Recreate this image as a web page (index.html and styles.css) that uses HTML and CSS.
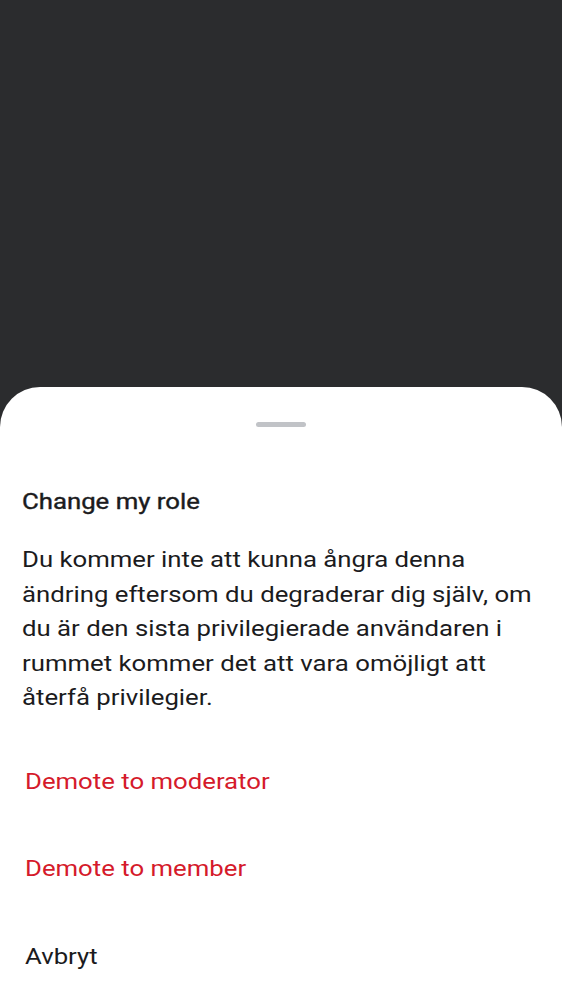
FILE: index.html
```html
<!DOCTYPE html>
<html lang="sv">
<head>
<meta charset="utf-8">
<link rel="stylesheet" href="styles.css">
</head>
<body>
<div class="screen">
  <div class="scrim"></div>
  <div class="sheet">
    <div class="handle-row"><div class="handle"></div></div>
    <h1 class="title wide">Change my role</h1>
    <p class="body wide">Du kommer inte att kunna ångra denna ändring eftersom du degraderar dig själv, om du är den sista privilegierade användaren i rummet kommer det att vara omöjligt att återfå privilegier.</p>
    <div class="actions">
      <div class="action danger"><span class="wide">Demote to moderator</span></div>
      <div class="action danger"><span class="wide">Demote to member</span></div>
      <div class="action"><span class="wide">Avbryt</span></div>
    </div>
  </div>
</div>
</body>
</html>
```

FILE: styles.css
```css
html, body {
  margin: 0;
  padding: 0;
}
body {
  width: 562px;
  height: 1000px;
  overflow: hidden;
  background: #2b2c2e;
  font-family: Roboto, "Noto Sans", sans-serif;
}
.screen {
  display: flex;
  flex-direction: column;
  height: 1000px;
}
.scrim {
  height: 387px;
  flex: none;
  background: #2b2c2e;
}
.sheet {
  flex: 1;
  background: #ffffff;
  border-radius: 40px 40px 0 0;
  display: flex;
  flex-direction: column;
}
.handle-row {
  display: flex;
  justify-content: center;
  padding-top: 35px;
  height: 5px;
}
.handle {
  width: 50px;
  height: 5px;
  border-radius: 3px;
  background: #c1c3c7;
}
.wide {
  display: inline-block;
  transform: scaleX(1.17);
  transform-origin: 0 50%;
}
.title {
  display: block;
  width: 443px;
  margin: 60px 0 0 22px;
  font-size: 22px;
  font-weight: 400;
  -webkit-text-stroke: 0.4px #1b1b1d;
  line-height: 30px;
  color: #1b1b1d;
}
.body {
  display: block;
  width: 443px;
  margin: 26px 0 0 22px;
  font-size: 22px;
  font-weight: 400;
  line-height: 34.5px;
  color: #1b1b1d;
}
.actions {
  margin-top: 22px;
  display: flex;
  flex-direction: column;
}
.action {
  height: 87.5px;
  line-height: 87.5px;
  padding-left: 25px;
  font-size: 22px;
  color: #1b1b1d;
}
.action.danger {
  color: #d51a2b;
}
```
